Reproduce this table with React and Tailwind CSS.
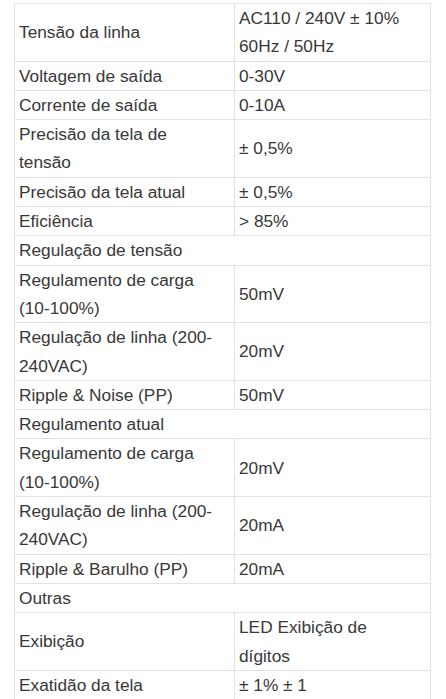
import React from 'react';

const rows = [
  { label: 'Tensão da linha', value: ['AC110 / 240V ± 10%', '60Hz / 50Hz'] },
  { label: 'Voltagem de saída', value: ['0-30V'] },
  { label: 'Corrente de saída', value: ['0-10A'] },
  { label: ['Precisão da tela de', 'tensão'], value: ['± 0,5%'] },
  { label: 'Precisão da tela atual', value: ['± 0,5%'] },
  { label: 'Eficiência', value: ['> 85%'] },
  { section: 'Regulação de tensão' },
  { label: ['Regulamento de carga', '(10-100%)'], value: ['50mV'] },
  { label: ['Regulação de linha (200-', '240VAC)'], value: ['20mV'] },
  { label: 'Ripple & Noise (PP)', value: ['50mV'] },
  { section: 'Regulamento atual' },
  { label: ['Regulamento de carga', '(10-100%)'], value: ['20mV'] },
  { label: ['Regulação de linha (200-', '240VAC)'], value: ['20mA'] },
  { label: 'Ripple & Barulho (PP)', value: ['20mA'] },
  { section: 'Outras' },
  { label: 'Exibição', value: ['LED Exibição de', 'dígitos'] },
  { label: 'Exatidão da tela', value: ['± 1% ± 1'] },
];

const Lines = ({ text }) => {
  const parts = Array.isArray(text) ? text : [text];
  return (
    <div>
      {parts.map((p, i) => (
        <div key={i}>{p}</div>
      ))}
    </div>
  );
};

export default function App() {
  return (
    <div className="w-[446px] h-[699px] overflow-hidden bg-white pt-[3px] font-['Liberation_Sans',Arial,sans-serif] text-[17.3px] leading-[28.3px] text-[#383838]">
      <div className="ml-[14px] w-[417px] border-t border-l border-r border-[#e2e2e2]">
        {rows.map((row, i) =>
          row.section ? (
            <div key={i} className="border-b border-[#e2e2e2] px-[4px]">
              {row.section}
            </div>
          ) : (
            <div key={i} className="flex border-b border-[#e2e2e2]">
              <div className="w-[220px] shrink-0 border-r border-[#e2e2e2] pl-[4px] pr-[6px] flex items-center">
                <Lines text={row.label} />
              </div>
              <div className="flex-1 pl-[4px] pr-[6px] flex items-center">
                <Lines text={row.value} />
              </div>
            </div>
          )
        )}
      </div>
    </div>
  );
}
